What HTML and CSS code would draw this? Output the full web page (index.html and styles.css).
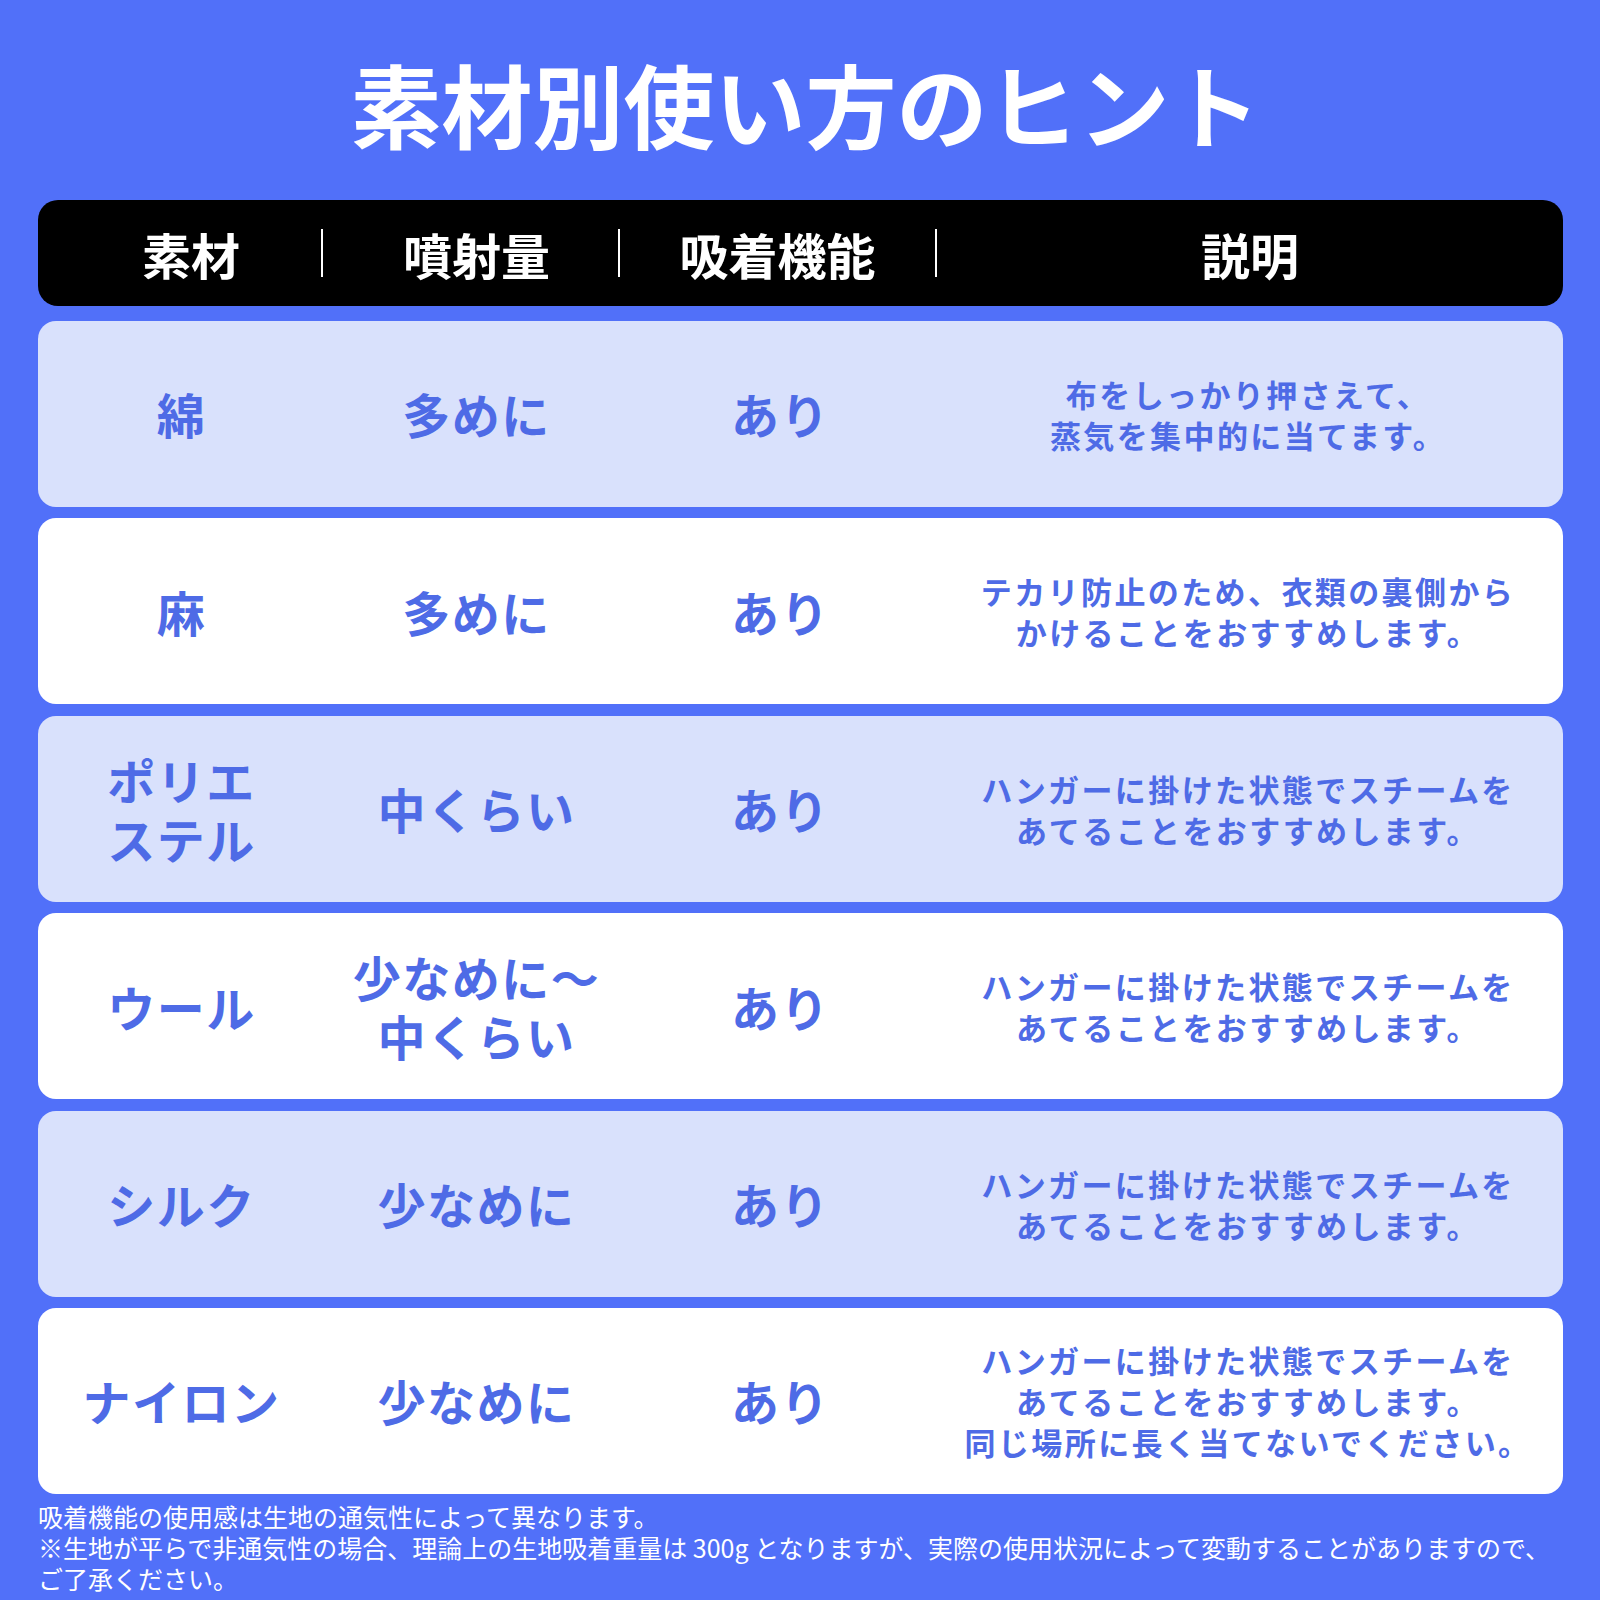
FILE: index.html
```html
<!DOCTYPE html>
<html lang="ja">
<head>
<meta charset="utf-8">
<title>素材別使い方のヒント</title>
<link rel="stylesheet" href="styles.css">
</head>
<body>
<div class="page">
  <h1 class="title">素材別使い方のヒント</h1>
  <div class="table">
    <div class="head">
      <div class="hcell hc1">素材</div>
      <div class="sep"></div>
      <div class="hcell hc2">噴射量</div>
      <div class="sep"></div>
      <div class="hcell hc3">吸着機能</div>
      <div class="sep"></div>
      <div class="hcell hc4">説明</div>
    </div>
    <div class="row alt">
      <div class="cell">綿</div>
      <div class="cell">多めに</div>
      <div class="cell">あり</div>
      <div class="desc">布をしっかり押さえて、<br>蒸気を集中的に当てます。</div>
    </div>
    <div class="row">
      <div class="cell">麻</div>
      <div class="cell">多めに</div>
      <div class="cell">あり</div>
      <div class="desc">テカリ防止のため、衣類の裏側から<br>かけることをおすすめします。</div>
    </div>
    <div class="row alt">
      <div class="cell">ポリエ<br>ステル</div>
      <div class="cell">中くらい</div>
      <div class="cell">あり</div>
      <div class="desc">ハンガーに掛けた状態でスチームを<br>あてることをおすすめします。</div>
    </div>
    <div class="row">
      <div class="cell">ウール</div>
      <div class="cell">少なめに〜<br>中くらい</div>
      <div class="cell">あり</div>
      <div class="desc">ハンガーに掛けた状態でスチームを<br>あてることをおすすめします。</div>
    </div>
    <div class="row alt">
      <div class="cell">シルク</div>
      <div class="cell">少なめに</div>
      <div class="cell">あり</div>
      <div class="desc">ハンガーに掛けた状態でスチームを<br>あてることをおすすめします。</div>
    </div>
    <div class="row">
      <div class="cell">ナイロン</div>
      <div class="cell">少なめに</div>
      <div class="cell">あり</div>
      <div class="desc">ハンガーに掛けた状態でスチームを<br>あてることをおすすめします。<br>同じ場所に長く当てないでください。</div>
    </div>
  </div>
  <div class="notes">
    <p>吸着機能の使用感は生地の通気性によって異なります。</p>
    <p>※生地が平らで非通気性の場合、理論上の生地吸着重量は 300g となりますが、実際の使用状況によって変動することがありますので、<br>ご了承ください。</p>
  </div>
</div>
</body>
</html>
```

FILE: styles.css
```css
html, body {
  margin: 0;
  padding: 0;
  background: #5170f9;
}
body {
  font-family: "Noto Sans CJK JP", "Noto Sans", sans-serif;
  width: 1600px;
  height: 1600px;
  overflow: hidden;
}
.page {
  padding: 49px 37px 0 38px;
  box-sizing: border-box;
}
.title {
  margin: 0;
  text-align: center;
  color: #ffffff;
  font-size: 91px;
  font-weight: 700;
  line-height: 106px;
  height: 106px;
  margin-bottom: 45px;
  padding-left: 10px;
}
.table {
  display: flex;
  flex-direction: column;
  gap: 11.4px;
  width: 1525px;
}
.head {
  background: #000000;
  border-radius: 20px;
  height: 106px;
  display: grid;
  grid-template-columns: 283px 2px 295px 2px 315px 2px 1fr;
  align-items: center;
  margin-bottom: 3.6px;
}
.hcell {
  color: #ffffff;
  font-size: 49px;
  font-weight: 700;
  text-align: center;
  line-height: 1;
}
.hc1 { padding-left: 23px; }
.hc2 { padding-left: 12px; }
.sep {
  width: 2px;
  height: 48px;
  background: #ffffff;
}
.row {
  background: #ffffff;
  border-radius: 18px;
  height: 186px;
  display: grid;
  grid-template-columns: 287px 303px 305px 1fr;
  align-items: center;
  color: #4e6be6;
}
.row.alt {
  background: #d9e1fc;
}
.cell {
  text-align: center;
  font-size: 48px;
  font-weight: 700;
  line-height: 59px;
  letter-spacing: 1.5px;
}
.desc {
  text-align: center;
  font-size: 31px;
  font-weight: 700;
  line-height: 41px;
  letter-spacing: 2.4px;
}
.notes {
  margin-top: 7px;
  color: #ffffff;
  font-size: 25px;
  line-height: 31px;
  font-weight: 400;
  width: 1530px;
}
.notes p {
  margin: 0;
}
```
